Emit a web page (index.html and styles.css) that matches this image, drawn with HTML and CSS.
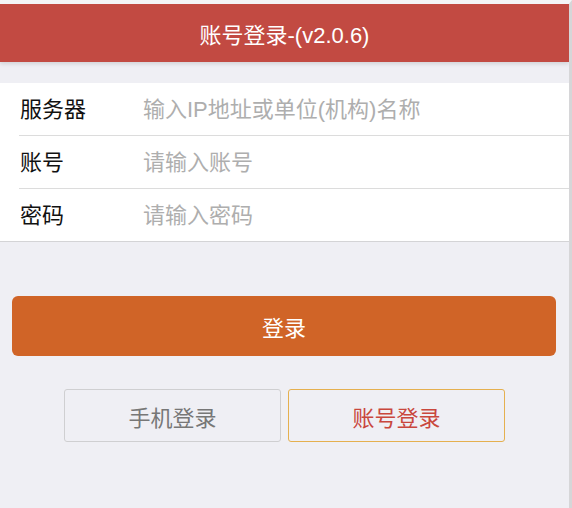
FILE: index.html
```html
<!DOCTYPE html>
<html lang="zh-CN">
<head>
<meta charset="utf-8">
<title>账号登录</title>
<link rel="stylesheet" href="styles.css">
</head>
<body>
<div class="app">
  <header class="topbar">账号登录-(v2.0.6)</header>
  <form class="form">
    <div class="row">
      <div class="row-inner">
        <label class="label">服务器</label>
        <input class="field" type="text" placeholder="输入IP地址或单位(机构)名称">
      </div>
    </div>
    <div class="row">
      <div class="row-inner">
        <label class="label">账号</label>
        <input class="field" type="text" placeholder="请输入账号">
      </div>
    </div>
    <div class="row">
      <div class="row-inner last">
        <label class="label">密码</label>
        <input class="field" type="password" placeholder="请输入密码">
      </div>
    </div>
  </form>
  <button class="login" type="button">登录</button>
  <div class="modes">
    <button class="mode" type="button">手机登录</button>
    <button class="mode active" type="button">账号登录</button>
  </div>
</div>
</body>
</html>
```

FILE: styles.css
```css
* { box-sizing: border-box; }
html, body {
  margin: 0;
  padding: 0;
  background: #efeff4;
  font-family: "Liberation Sans", "Noto Sans CJK SC", sans-serif;
}
.app {
  width: 572px;
  height: 508px;
  border-top: 4px solid #f4f4f6;
  border-right: 3px solid #d6d6d8;
  background: #efeff4;
  overflow: hidden;
}
.topbar {
  height: 58px;
  background: #c24a42;
  color: #ffffff;
  font-size: 22px;
  display: flex;
  align-items: center;
  justify-content: center;
  padding-bottom: 1px;
  box-shadow: 0 2px 4px rgba(0, 0, 0, 0.12);
}
.form {
  margin: 21px 0 0;
  background: #ffffff;
  border-bottom: 1px solid #d4d4d6;
}
.row {
  padding-left: 19px;
}
.row-inner {
  height: 53px;
  display: flex;
  align-items: center;
  border-bottom: 1px solid #dcdcdc;
  padding-left: 1px;
  padding-top: 2px;
}
.row-inner.last {
  height: 52px;
  border-bottom: none;
}
.label {
  width: 123px;
  flex: none;
  font-size: 22px;
  line-height: 28px;
  height: 28px;
  color: #111111;
}
.field {
  flex: 1;
  border: none;
  outline: none;
  background: transparent;
  padding: 0;
  height: 28px;
  line-height: 28px;
  font-family: "Liberation Sans", "Noto Sans CJK SC", sans-serif;
  font-size: 22px;
  color: #111111;
}
.field::placeholder {
  color: #aeaeae;
}
.login {
  display: block;
  margin: 54px 13px 0 12px;
  width: 544px;
  height: 60px;
  border: none;
  border-radius: 6px;
  background: #d06427;
  color: #ffffff;
  font-family: "Liberation Sans", "Noto Sans CJK SC", sans-serif;
  font-size: 22px;
}
.modes {
  margin-top: 33px;
  display: flex;
  justify-content: center;
  gap: 7px;
}
.mode {
  width: 217px;
  height: 53px;
  border: 1px solid #cfcfd1;
  border-radius: 3px;
  background: transparent;
  color: #777777;
  font-family: "Liberation Sans", "Noto Sans CJK SC", sans-serif;
  font-size: 22px;
}
.mode.active {
  border-color: #e5b04f;
  color: #c9473d;
}
```
